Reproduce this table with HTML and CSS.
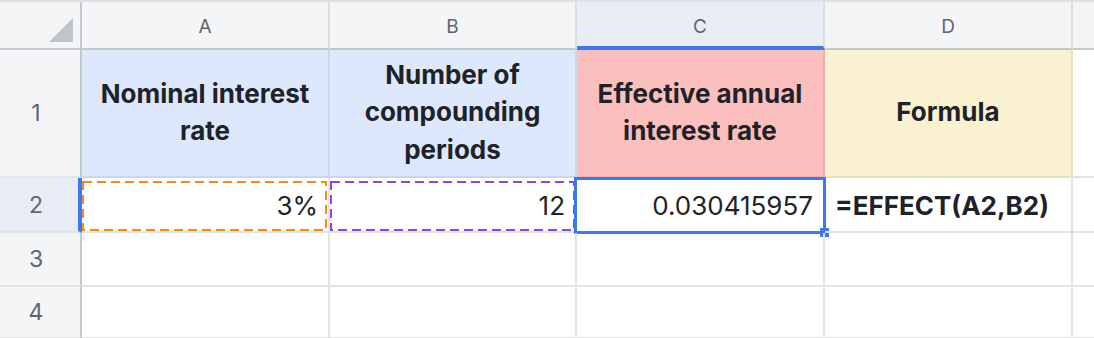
FILE: index.html
```html
<!DOCTYPE html>
<html>
<head>
<meta charset="utf-8">
<link rel="stylesheet" href="styles.css">
</head>
<body>
<div class="sheet">
  <div class="corner"><span class="tri"></span></div>
  <div class="colhead">A</div>
  <div class="colhead">B</div>
  <div class="colhead colhead-sel">C</div>
  <div class="colhead">D</div>
  <div class="colhead colhead-last"></div>

  <div class="rowhead">1</div>
  <div class="cell title blue">Nominal interest rate</div>
  <div class="cell title blue">Number of compounding periods</div>
  <div class="cell title pink">Effective annual interest rate</div>
  <div class="cell title yellow">Formula</div>
  <div class="cell edge"></div>

  <div class="rowhead rowhead-sel">2</div>
  <div class="cell num">3%
    <svg class="ref" viewBox="0 0 245 50" preserveAspectRatio="none"><rect x="1" y="1" width="243" height="48" fill="none" stroke="#f88a12" stroke-width="2" stroke-dasharray="9 5"/></svg>
  </div>
  <div class="cell num">12
    <svg class="ref ref-b" viewBox="0 0 245 50" preserveAspectRatio="none"><rect x="1" y="1" width="243" height="48" fill="none" stroke="#8a45ef" stroke-width="2" stroke-dasharray="9 5"/></svg>
  </div>
  <div class="cell num">0.030415957
    <span class="selbox"></span><span class="handle"></span>
  </div>
  <div class="cell formula">=EFFECT(A2,B2)</div>
  <div class="cell edge"></div>

  <div class="rowhead">3</div>
  <div class="cell"></div>
  <div class="cell"></div>
  <div class="cell"></div>
  <div class="cell"></div>
  <div class="cell edge"></div>

  <div class="rowhead">4</div>
  <div class="cell"></div>
  <div class="cell"></div>
  <div class="cell"></div>
  <div class="cell"></div>
  <div class="cell edge"></div>
</div>
</body>
</html>
```

FILE: styles.css
```css
* { box-sizing: border-box; }
html, body { margin: 0; padding: 0; background: #fff; }
body { font-family: Inter, "Noto Sans", sans-serif; overflow: hidden; }

.sheet {
  display: grid;
  grid-template-columns: 82px 248px 247px 248px 248px 1fr;
  grid-template-rows: 48px 128px 55px 54px 52px;
  border-top: 2px solid #dfe0e3;
  width: 1094px;
  height: 338px;
}

.corner {
  position: relative;
  background: #f4f5f7;
  border-right: 2px solid #c4c7cb;
  border-bottom: 2px solid #c4c7cb;
}
.tri {
  position: absolute;
  right: 7px;
  bottom: 6px;
  width: 0;
  height: 0;
  border-left: 24px solid transparent;
  border-bottom: 24px solid #c1c4c8;
}

.colhead {
  display: flex;
  align-items: center;
  justify-content: center;
  background: #f4f5f7;
  border-right: 2px solid #dcdee1;
  border-bottom: 2px solid #c4c7cb;
  color: #5f6670;
  font-size: 19px;
  padding-top: 2px;
}
.colhead-sel {
  background: #e8ecf4;
  border-bottom: 4px solid #3b78f1;
  padding-top: 4px;
}
.colhead-last { border-right: none; }

.rowhead {
  display: flex;
  align-items: center;
  justify-content: center;
  background: #f4f5f7;
  border-right: 2px solid #c4c7cb;
  border-bottom: 2px solid #e3e4e6;
  color: #5f6670;
  font-size: 23px;
  padding-right: 8px;
}
.rowhead-sel {
  background: #e8ecf4;
  border-right: 4px solid #3b78f1;
  padding-right: 6px;
}

.cell {
  position: relative;
  border-right: 2px solid #e3e3e3;
  border-bottom: 2px solid #e3e3e3;
  color: #222326;
  font-size: 26px;
}
.cell.edge { border-right: none; }

.title {
  display: flex;
  align-items: center;
  justify-content: center;
  text-align: center;
  font-weight: 700;
  font-size: 26px;
  line-height: 37.5px;
  color: #1f2329;
  padding: 0 8px 2px;
}
.blue { background: #dde8fc; border-color: #ccd7ea; }
.pink { background: #fbbfbd; border-color: #e9b0ae; }
.yellow { background: #faf1d1; border-color: #e9e0c0; }

.num {
  display: flex;
  align-items: center;
  justify-content: flex-end;
  padding-right: 10px;
  padding-top: 1px;
}
.formula {
  display: flex;
  align-items: center;
  padding-left: 10px;
  padding-top: 1px;
  font-weight: 700;
  font-size: 26px;
  white-space: nowrap;
  color: #1f2329;
}

.ref {
  position: absolute;
  left: 0;
  top: 3px;
  width: 245px;
  height: 50px;
}

.selbox {
  position: absolute;
  left: -3px;
  right: -3px;
  top: -1px;
  bottom: -3px;
  border: 3px solid #3b78f1;
}
.handle {
  position: absolute;
  right: -6px;
  bottom: -6px;
  width: 9px;
  height: 9px;
  background: #3b78f1;
}
```
